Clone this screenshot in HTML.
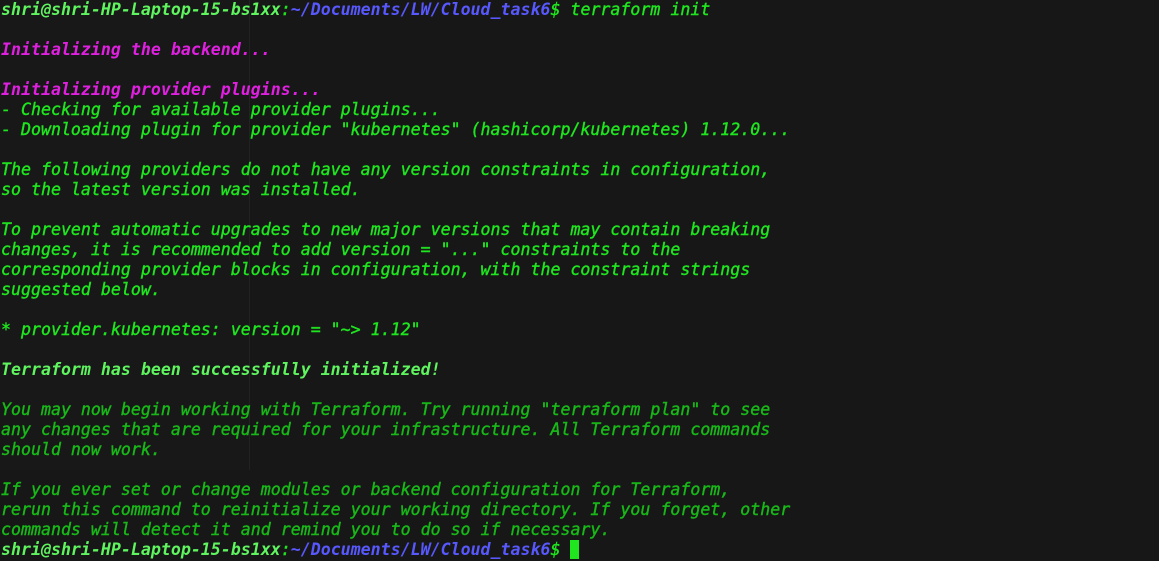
<!DOCTYPE html><html><head><style>
html,body{margin:0;padding:0;background:#171717;width:1159px;height:561px;overflow:hidden;position:relative}
.sb{position:absolute;left:0;top:0;width:249px;height:470px;border-right:1px solid #222;background:#181818}
pre{position:absolute;left:1px;top:0;margin:0;font-family:"DejaVu Sans Mono","Liberation Mono",monospace;font-style:italic;font-size:16.6px;line-height:20px;color:#1fe61f;white-space:pre;-webkit-text-stroke:0.4px currentColor}
.p{color:#5ff55f;font-weight:bold;-webkit-text-stroke:0}.b{color:#5858ff;font-weight:bold;-webkit-text-stroke:0}.m{color:#e020e0;font-weight:bold;-webkit-text-stroke:0}
.g{color:#5ff55f;font-weight:bold;-webkit-text-stroke:0}.d{color:#18b818}
.c{display:inline-block;width:9px;height:19px;background:#1fe61f;vertical-align:-4px}
</style></head><body><div class="sb"></div><pre><span class="p">shri@shri-HP-Laptop-15-bs1xx</span>:<span class="b">~/Documents/LW/Cloud_task6</span>$ terraform init

<span class="m">Initializing the backend...</span>

<span class="m">Initializing provider plugins...</span>
- Checking for available provider plugins...
- Downloading plugin for provider "kubernetes" (hashicorp/kubernetes) 1.12.0...

The following providers do not have any version constraints in configuration,
so the latest version was installed.

To prevent automatic upgrades to new major versions that may contain breaking
changes, it is recommended to add version = "..." constraints to the
corresponding provider blocks in configuration, with the constraint strings
suggested below.

* provider.kubernetes: version = "~> 1.12"

<span class="g">Terraform has been successfully initialized!</span>

<span class="d">You may now begin working with Terraform. Try running "terraform plan" to see
any changes that are required for your infrastructure. All Terraform commands
should now work.

If you ever set or change modules or backend configuration for Terraform,
rerun this command to reinitialize your working directory. If you forget, other
commands will detect it and remind you to do so if necessary.</span>
<span class="p">shri@shri-HP-Laptop-15-bs1xx</span>:<span class="b">~/Documents/LW/Cloud_task6</span>$ <span class="c"></span></pre></body></html>
